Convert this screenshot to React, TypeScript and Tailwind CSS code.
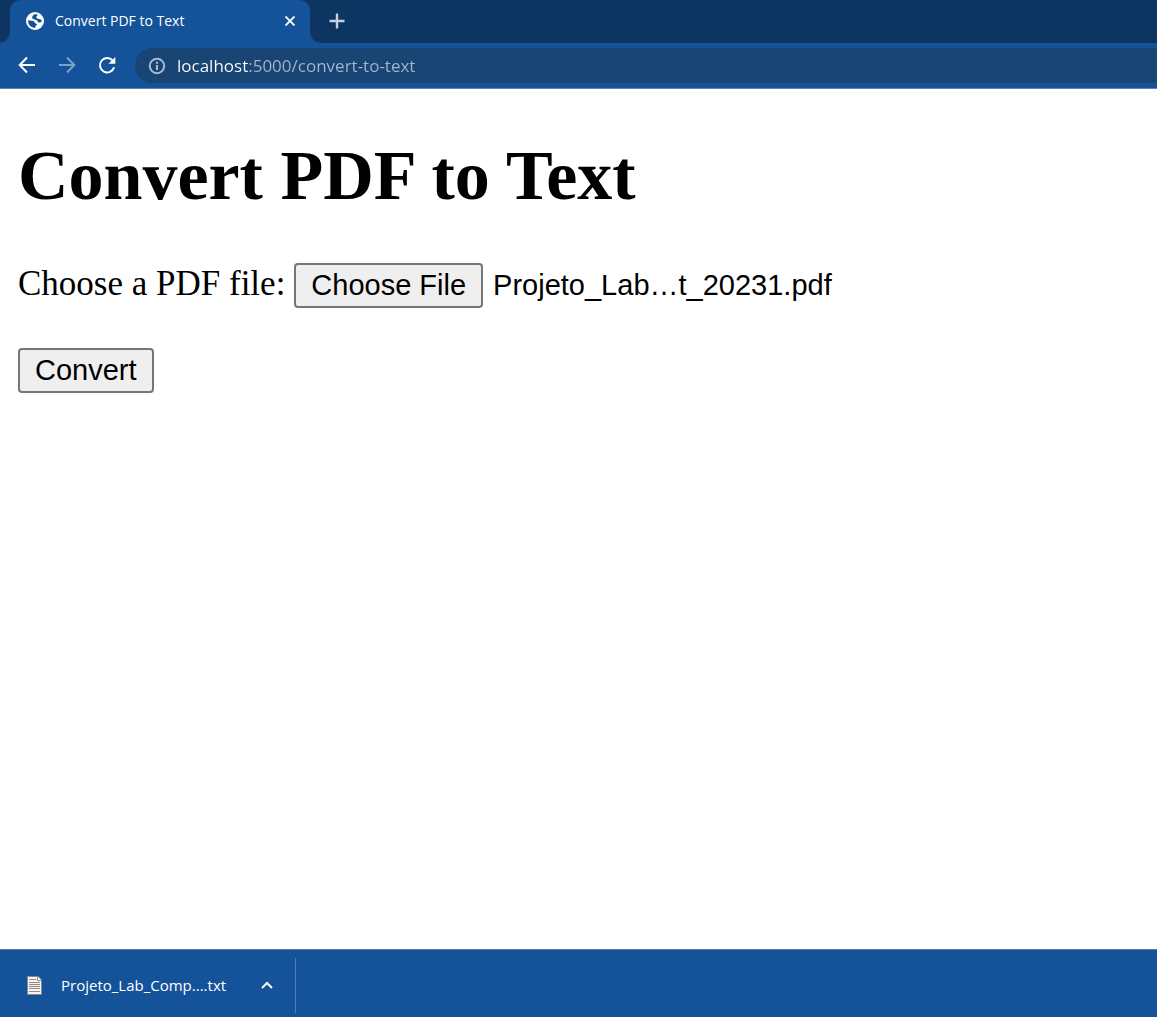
import { useRef, useState } from "react";

const flare =
  "before:absolute before:bottom-0 before:-left-[10px] before:size-[10px] before:bg-[radial-gradient(circle_at_0_0,transparent_9px,#14529a_10px)] after:absolute after:bottom-0 after:-right-[10px] after:size-[10px] after:bg-[radial-gradient(circle_at_100%_0,transparent_9px,#14529a_10px)]";

function GlobeIcon() {
  return (
    <svg viewBox="0 0 18 18" className="size-[18px] shrink-0" aria-hidden="true">
      <circle cx="9" cy="9" r="9" fill="#fff" />
      <path
        d="M11.500 2.600C9.500 2 7.800 2.600 6.800 3.700 5.700 4.900 5.900 6.600 7.300 7.100L10.300 7.900C11.600 8.300 11.300 10 12.600 10.400 13.800 10.800 15 10.400 15.900 9.600 15.600 7.900 14.700 7.200 13.300 7.100 11.400 7 10.200 6.300 10.400 5.100 10.600 4.100 11.800 3.900 11.500 2.600Z"
        fill="#14529a"
      />
      <path
        d="M2.100 8.300C3.300 8.600 4.600 8.700 6 8.800 7.900 9 8.700 9.900 8.900 11 9.300 11.400 10.600 11.300 11 12.300 11.300 13.300 9.500 13.600 9.300 14.400 9.200 15.200 9.800 15.700 8.600 15.900 4.700 15.600 1.900 12.400 2.100 8.300Z"
        fill="#14529a"
      />
    </svg>
  );
}

function ArrowIcon({ flip = false }: { flip?: boolean }) {
  return (
    <svg viewBox="0 0 20 20" className="size-5" fill="none" stroke="currentColor" strokeWidth="2" aria-hidden="true">
      <path d={flip ? "M2 10h15M10 2.500 17.300 10 10 17.500" : "M18 10H3M10 2.500 2.700 10 10 17.500"} />
    </svg>
  );
}

function ReloadIcon() {
  return (
    <svg viewBox="0 0 20 20" className="size-5" aria-hidden="true">
      <path d="M17.100 12.300A7.200 7.200 0 1 1 15.600 5.400" fill="none" stroke="currentColor" strokeWidth="2" />
      <path d="M18.300 2v6.700H11.500Z" fill="currentColor" />
    </svg>
  );
}

function InfoIcon() {
  return (
    <svg viewBox="0 0 18 18" className="size-[18px] shrink-0" fill="none" stroke="#a9bbcf" strokeWidth="2" aria-hidden="true">
      <circle cx="9" cy="9" r="7.200" />
      <path d="M9 8v5M9 4.800v2" />
    </svg>
  );
}

function TextFileIcon() {
  return (
    <svg viewBox="0 0 15 19" className="h-[19px] w-[15px] shrink-0" aria-hidden="true">
      <path d="M.5.500h10.500L14.500 4v14.500H.500Z" fill="#f7f5f2" stroke="#85888c" />
      <path d="M10.500.500V4.500h4" fill="#fff" stroke="#85888c" />
      <path d="M2 3.500h7M2 6.500h11M2 8.500h11M2 10.500h11M2 12.500h11M2 15.500h11" stroke="#8f8a85" />
    </svg>
  );
}

function TabStrip() {
  return (
    <div className="flex h-[43px] items-stretch bg-[#0c3561] pl-[10px]">
      <div className={`relative flex w-[300px] items-center rounded-t-[10px] bg-[#14529a] pr-3 pb-px pl-4 ${flare}`}>
        <GlobeIcon />
        <span className="ml-[11px] flex-1 truncate text-sm text-white">Convert PDF to Text</span>
        <button type="button" aria-label="Close tab" className="p-[3px] text-white">
          <svg viewBox="0 0 10 10" className="size-[10px]" stroke="currentColor" strokeWidth="1.900" aria-hidden="true">
            <path d="M.5.500l9 9M9.500.500l-9 9" />
          </svg>
        </button>
      </div>
      <button type="button" aria-label="New tab" className="ml-[15px] px-1 pb-px text-[#c3cfdc]">
        <svg viewBox="0 0 16 16" className="size-4" stroke="currentColor" strokeWidth="2.400" aria-hidden="true">
          <path d="M8 .500v15M.5 8h15" />
        </svg>
      </button>
    </div>
  );
}

function Toolbar() {
  const [address, setAddress] = useState("localhost:5000/convert-to-text");
  return (
    <div className="flex items-center border-b border-[#5f83ad] bg-[#14529a] py-[5px] pl-[17px]">
      <div className="flex w-[118px] items-center gap-5 pb-px text-white">
        <button type="button" aria-label="Back">
          <ArrowIcon />
        </button>
        <button type="button" aria-label="Forward" className="text-[#7d9fca]">
          <ArrowIcon flip />
        </button>
        <button type="button" aria-label="Reload">
          <ReloadIcon />
        </button>
      </div>
      <div className="flex h-[35px] flex-1 items-center rounded-l-full bg-[#184574] pl-[13px]">
        <InfoIcon />
        <input
          type="text"
          aria-label="Address"
          value={address}
          onChange={(e) => setAddress(e.target.value)}
          className="ml-[11px] flex-1 bg-[linear-gradient(to_right,#fff_71px,#a3b7d0_71px)] bg-clip-text text-[17px] text-transparent caret-white outline-none"
        />
      </div>
    </div>
  );
}

function ConvertPage() {
  const fileInput = useRef<HTMLInputElement>(null);
  const [fileName, setFileName] = useState("Projeto_Lab…t_20231.pdf");
  const button =
    "rounded-[4px] border-2 border-[#767676] bg-[#efefef] px-[15px] font-['Liberation_Sans',Arial,sans-serif] text-[29px] leading-[41px]";
  return (
    <main className="flex-1 bg-white px-[18px] pt-[47px] font-['Liberation_Serif','Times_New_Roman',serif] text-black">
      <h1 className="text-[70px] leading-[80px] font-bold">Convert PDF to Text</h1>
      <form onSubmit={(e) => e.preventDefault()} className="mt-[47px] flex flex-col items-start gap-10">
        <div className="flex flex-wrap items-baseline">
          <label htmlFor="pdf" className="mr-[9px] text-[35px] leading-10">
            Choose a PDF file:
          </label>
          <input
            ref={fileInput}
            id="pdf"
            type="file"
            accept="application/pdf"
            className="hidden"
            onChange={(e) => setFileName(e.target.files?.[0]?.name ?? "No file chosen")}
          />
          <button type="button" className={button} onClick={() => fileInput.current?.click()}>
            Choose File
          </button>
          <output htmlFor="pdf" className="ml-[10px] font-['Liberation_Sans',Arial,sans-serif] text-[29px] leading-[41px]">
            {fileName}
          </output>
        </div>
        <button type="submit" className={button}>
          Convert
        </button>
      </form>
    </main>
  );
}

function DownloadShelf() {
  return (
    <footer className="flex border-t border-[#4f7bab] bg-[#14529a] pt-2 pb-1">
      <div className="flex h-[55px] w-[296px] items-center border-r border-[#4c7db5] pb-px pl-[27px]">
        <TextFileIcon />
        <a href="#download" className="ml-[19px] flex-1 truncate text-[15px] text-white">
          Projeto_Lab_Comp....txt
        </a>
        <button type="button" aria-label="Download options" className="mr-[22px] text-white">
          <svg viewBox="0 0 12 8" className="h-2 w-3" fill="none" stroke="currentColor" strokeWidth="2" aria-hidden="true">
            <path d="M1 7l5-5 5 5" />
          </svg>
        </button>
      </div>
    </footer>
  );
}

export default function App() {
  return (
    <div className="flex min-h-screen flex-col font-['Open_Sans','Segoe_UI',sans-serif]">
      <header>
        <TabStrip />
        <Toolbar />
      </header>
      <ConvertPage />
      <DownloadShelf />
    </div>
  );
}
